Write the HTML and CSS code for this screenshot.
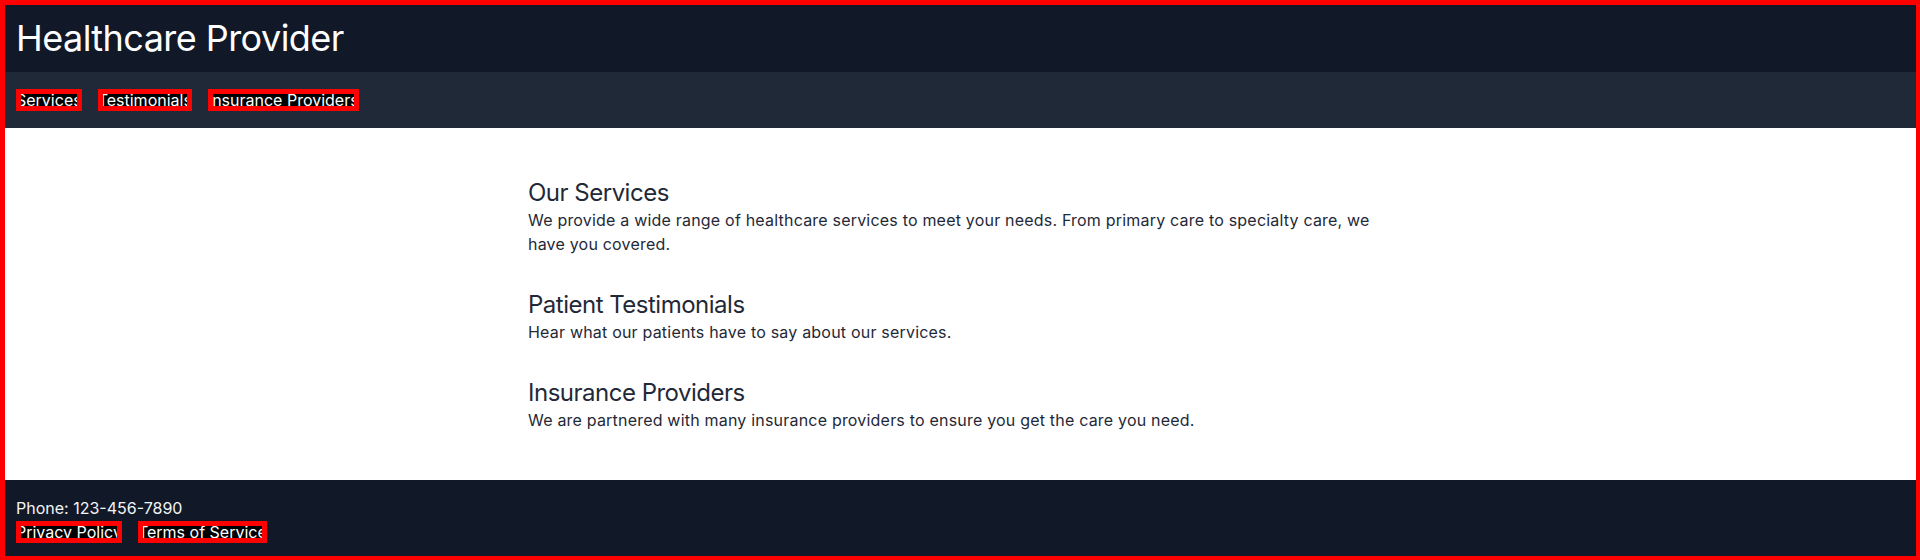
FILE: index.html
```html
<!DOCTYPE html>
<html lang="en">
<head>
<meta charset="utf-8">
<title>Healthcare Provider</title>
<link rel="stylesheet" href="styles.css">
</head>
<body>
<header class="site-header">
  <h1 class="site-title">Healthcare Provider</h1>
</header>
<nav class="site-nav">
  <a class="flag-link" href="#services">Services</a>
  <a class="flag-link" href="#testimonials">Testimonials</a>
  <a class="flag-link" href="#insurance">Insurance Providers</a>
</nav>
<main class="site-main">
  <div class="container">
    <section class="block" id="services">
      <h2 class="block-title">Our Services</h2>
      <p class="block-text">We provide a wide range of healthcare services to meet your needs. From primary care to specialty care, we have you covered.</p>
    </section>
    <section class="block" id="testimonials">
      <h2 class="block-title">Patient Testimonials</h2>
      <p class="block-text">Hear what our patients have to say about our services.</p>
    </section>
    <section class="block" id="insurance">
      <h2 class="block-title">Insurance Providers</h2>
      <p class="block-text">We are partnered with many insurance providers to ensure you get the care you need.</p>
    </section>
  </div>
</main>
<footer class="site-footer">
  <p class="phone">Phone: 123-456-7890</p>
  <div class="footer-links">
    <a class="flag-link" href="#">Privacy Policy</a>
    <a class="flag-link" href="#">Terms of Service</a>
  </div>
</footer>
<div class="frame"></div>
</body>
</html>
```
FILE: styles.css
```css
* { box-sizing: border-box; }
html, body { margin: 0; padding: 0; }
body {
  font-family: "Inter", "Noto Sans", sans-serif;
  font-size: 16px;
  line-height: 24px;
  background: #ffffff;
  color: #1f2937;
  height: 560px;
  overflow: hidden;
}
.site-header {
  background: #111827;
  padding: 18px 16px 14px;
}
.site-title {
  margin: 0;
  font-size: 36px;
  line-height: 40px;
  font-weight: 400;
  letter-spacing: -0.55px;
  color: #ffffff;
}
.site-nav {
  background: #1f2937;
  padding: 16px;
  height: 56px;
  display: flex;
  align-items: center;
  gap: 16px;
}
.flag-link {
  position: relative;
  display: block;
  height: 22px;
  line-height: 23px;
  color: #ffffff;
  background: #000000;
  text-decoration: none;
  white-space: nowrap;
  overflow: hidden;
}
.flag-link::after {
  content: "";
  position: absolute;
  inset: 0;
  border: 5px solid #ff0000;
}
.site-main {
  background: #ffffff;
  padding: 48px 0;
}
.container {
  max-width: 896px;
  margin: 0 auto;
  padding: 0 16px;
}
.block { margin-bottom: 32px; }
.block:last-child { margin-bottom: 0; }
.block-title {
  margin: 0;
  padding-top: 1px;
  font-size: 24px;
  line-height: 31px;
  font-weight: 400;
  letter-spacing: -0.5px;
  color: #1f2937;
}
.block-text {
  margin: 0;
  letter-spacing: 0.2px;
  color: #1f2937;
}
.site-footer {
  background: #111827;
  padding: 16px;
  height: 80px;
  color: #ffffff;
}
.phone {
  margin: 0;
  color: #f3f4f6;
}
.footer-links {
  display: flex;
  align-items: center;
  gap: 16px;
  height: 24px;
}
.frame {
  position: fixed;
  inset: 0;
  border-style: solid;
  border-color: #ff0000;
  border-width: 5px 4px 4px 5px;
  pointer-events: none;
}
```
